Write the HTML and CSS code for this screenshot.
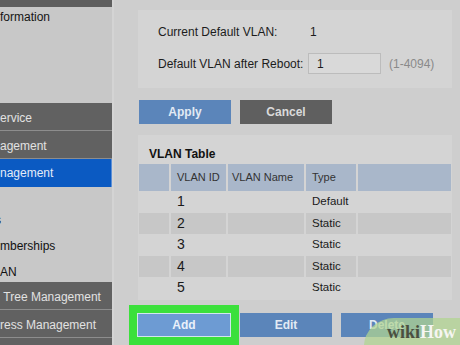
FILE: index.html
```html
<!DOCTYPE html>
<html lang="en">
<head>
    <meta charset="UTF-8">
    <title>VLAN Management</title>
    <link rel="stylesheet" href="styles.css">
</head>
<body>
    <div class="page">
        <aside class="sidebar">
            <div class="side-top"></div>
            <div class="side-link">formation</div>
            <div class="side-spacer"></div>
            <div class="side-item">ervice</div>
            <div class="side-item">agement</div>
            <div class="side-item active">nagement</div>
            <div class="side-sub">
                <div class="sub-link clipped">s</div>
                <div class="sub-link">mberships</div>
                <div class="sub-link">AN</div>
            </div>
            <div class="side-item">&nbsp;Tree Management</div>
            <div class="side-item">ress Management</div>
            <div class="side-item"></div>
        </aside>

        <main class="content">
            <section class="panel settings">
                <div class="field-row">
                    <span class="field-label">Current Default VLAN:</span>
                    <span class="field-value">1</span>
                </div>
                <div class="field-row input-row">
                    <span class="field-label">Default VLAN after Reboot:</span>
                    <input type="text" class="vlan-input" value="1">
                    <span class="hint">(1-4094)</span>
                </div>
            </section>

            <div class="btn-row">
                <button class="btn btn-blue">Apply</button>
                <button class="btn btn-gray">Cancel</button>
            </div>

            <section class="panel table-panel">
                <div class="table-title">VLAN Table</div>
                <div class="vlan-table">
                    <div class="th"></div>
                    <div class="th">VLAN ID</div>
                    <div class="th">VLAN Name</div>
                    <div class="th">Type</div>
                    <div class="th"></div>

                    <div class="td"></div><div class="td num">1</div><div class="td"></div><div class="td">Default</div><div class="td"></div>
                    <div class="td alt"></div><div class="td alt num">2</div><div class="td alt"></div><div class="td alt">Static</div><div class="td alt"></div>
                    <div class="td"></div><div class="td num">3</div><div class="td"></div><div class="td">Static</div><div class="td"></div>
                    <div class="td alt"></div><div class="td alt num">4</div><div class="td alt"></div><div class="td alt">Static</div><div class="td alt"></div>
                    <div class="td"></div><div class="td num">5</div><div class="td"></div><div class="td">Static</div><div class="td"></div>
                </div>
            </section>

            <div class="btn-row bottom-row">
                <button class="btn btn-add">Add</button>
                <button class="btn btn-blue">Edit</button>
                <button class="btn btn-blue">Delete</button>
            </div>
        </main>

        <div class="watermark"><span class="wm-wiki">wiki</span><span class="wm-how">How</span></div>
    </div>
</body>
</html>
```

FILE: styles.css
```css
* {
    box-sizing: border-box;
    margin: 0;
    padding: 0;
}

body {
    font-family: 'Liberation Sans', Arial, sans-serif;
    background-color: #cecece;
    color: #1c1c1c;
}

.page {
    position: relative;
    display: flex;
    width: 460px;
    height: 345px;
    overflow: hidden;
}

/* left menu */
.sidebar {
    width: 114px;
    flex-shrink: 0;
    display: flex;
    flex-direction: column;
    background-color: #c8c8c8;
    border-right: 2px solid #d4d4d4;
    font-size: 12px;
    white-space: nowrap;
    overflow: hidden;
}

.sidebar > div {
    flex-shrink: 0;
}

.side-top {
    height: 7px;
    background-color: #5e5e5e;
}

.side-link {
    height: 20px;
    line-height: 20px;
    color: #151515;
}

.side-spacer {
    height: 76px;
}

.side-item {
    height: 28px;
    padding-top: 3px;
    line-height: 24px;
    background-color: #616161;
    border-bottom: 1px solid #8d8d8d;
    color: #e2e2e2;
}

.side-item.active {
    background-color: #0b5ac2;
    border-bottom: none;
    border-right: 1px solid #5c8fd6;
    color: #e4ecf8;
    padding-top: 2px;
}

.side-sub {
    display: flex;
    flex-direction: column;
    gap: 6px;
    padding-top: 23px;
    height: 95px;
}

.sub-link {
    height: 20px;
    line-height: 20px;
    color: #111;
}

.sub-link.clipped {
    margin-left: -5px;
}

/* main area */
.content {
    flex: 1;
    padding: 10px 8px 0 24px;
}

.panel {
    background-color: #d4d4d4;
}

.settings {
    height: 78px;
    padding: 13px 0 14px 20px;
    font-size: 12px;
}

.field-row {
    display: flex;
    height: 18px;
    line-height: 18px;
}

.field-label {
    width: 150px;
    flex-shrink: 0;
}

.field-value {
    padding-left: 2px;
}

.input-row {
    margin-top: 12px;
    height: 21px;
    align-items: center;
}

.vlan-input {
    width: 73px;
    height: 21px;
    border: 1px solid #bcbcbc;
    background-color: #d9d9d9;
    padding-left: 8px;
    font-family: inherit;
    font-size: 12px;
    color: #1c1c1c;
}

.hint {
    margin-left: 8px;
    color: #8a8a8a;
}

.btn-row {
    display: flex;
    gap: 9px;
    margin-top: 12px;
    padding-left: 1px;
}

.btn {
    width: 92px;
    height: 24px;
    border: none;
    font-family: inherit;
    font-size: 12px;
    font-weight: bold;
    cursor: pointer;
}

.btn-blue {
    background-color: #5b85ba;
    color: #e2eaf4;
}

.btn-gray {
    background-color: #5f5f5f;
    color: #dadada;
}

.btn-add {
    width: 94px;
    margin-left: -2px;
    background-color: #6d9bd3;
    border: 1px solid #d2e6ec;
    color: #eaf1fa;
    box-shadow: 0 0 0 8px #3be03b;
}

/* table */
.table-panel {
    margin-top: 11px;
    padding: 10px 1px 1px 1px;
}

.table-title {
    height: 18px;
    line-height: 18px;
    padding-left: 10px;
    margin-bottom: 1px;
    font-size: 12px;
    font-weight: bold;
    color: #111;
}

.vlan-table {
    display: grid;
    grid-template-columns: 30px 55px 76px 50px 1fr;
    grid-template-rows: 27px repeat(5, 21.5px);
    column-gap: 2px;
}

.th {
    background-color: #a9b7ca;
    font-size: 11px;
    line-height: 27px;
    color: #333;
    padding-left: 6px;
}

.th:nth-child(3) {
    padding-left: 4px;
}

.td {
    font-size: 11.5px;
    line-height: 21.5px;
    padding-left: 6px;
    color: #1a1a1a;
}

.td.num {
    font-size: 14px;
}

.td.alt {
    background-color: #c7c7c7;
}

.bottom-row {
    margin-top: 13px;
}

/* watermark overlay */
.watermark {
    position: absolute;
    left: 364px;
    top: 318px;
    width: 110px;
    height: 40px;
    border-top-left-radius: 30px 28px;
    background-color: rgba(178, 214, 144, 0.72);
    padding: 3px 0 0 23px;
    font-family: 'Liberation Serif', 'Times New Roman', serif;
    font-size: 18px;
    font-weight: bold;
    line-height: 22px;
}

.wm-wiki {
    color: #4b4f3f;
}

.wm-how {
    color: #f6f6f2;
}
```
